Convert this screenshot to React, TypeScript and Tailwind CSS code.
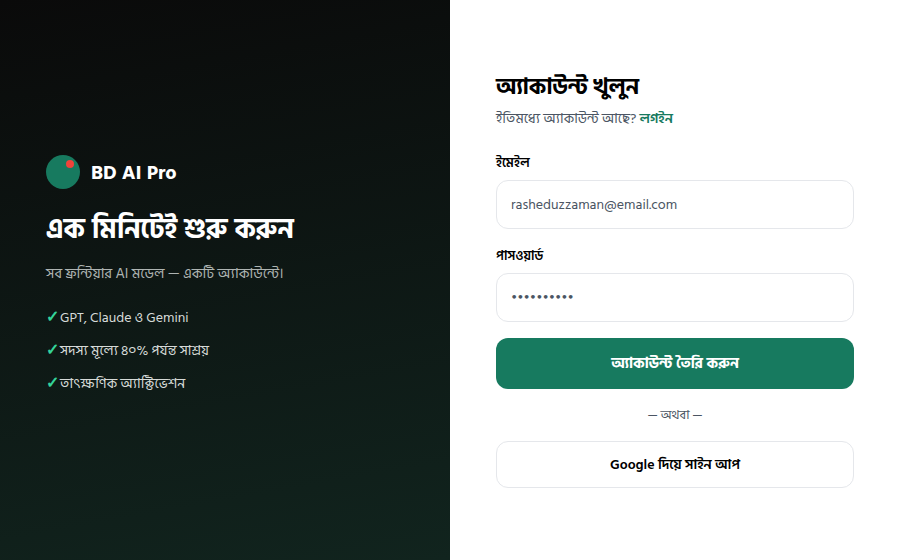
const features = ["GPT, Claude ও Gemini", "সদস্য মূল্যে ৪০% পর্যন্ত সাশ্রয়", "তাৎক্ষণিক অ্যাক্টিভেশন"];

const App = () => {
  return (
    <main className="flex h-[560px] w-[900px] bg-white font-['Hind_Siliguri',sans-serif] antialiased">
      <div className="flex w-[450px] flex-col justify-center bg-[linear-gradient(170deg,#0a0a0a_0%,#11241e_100%)] px-[46px]">
        <div className="mb-[22px] flex items-center gap-[11px]">
          <div className="relative h-[34px] w-[34px] rounded-full bg-[#177a5f]">
            <div className="absolute left-[20px] top-[5px] h-2 w-2 rounded-full bg-[#f0433a]" />
          </div>
          <span className="pt-[2px] text-xl font-bold text-white">BD AI Pro</span>
        </div>
        <h2 className="mb-[13px] text-[27.5px] font-bold leading-[38px] text-white">এক মিনিটেই শুরু করুন</h2>
        <p className="mb-[20px] text-[14.5px] leading-[24px] text-[#aeb4b2]">সব ফ্রন্টিয়ার AI মডেল — একটি অ্যাকাউন্টে।</p>
        <ul>
          {features.map((item) => (
            <li key={item} className="mb-[10px] flex items-center text-sm leading-[23px] text-[#d6dad8]">
              <span className="w-[14px] shrink-0 text-base font-bold leading-[23px] text-[#34d399]">✓</span>
              {item}
            </li>
          ))}
        </ul>
      </div>
      <div className="flex w-[450px] flex-col justify-center px-[46px]">
        <h1 className="mb-[9px] pt-[2px] text-[22.5px] font-bold leading-[26px] text-black">অ্যাকাউন্ট খুলুন</h1>
        <p className="mb-6 text-sm leading-5 text-[#4b5563]">
          ইতিমধ্যে অ্যাকাউন্ট আছে? <span className="font-semibold text-[#177a5f]">লগইন</span>
        </p>
        <label className="mb-[7px] text-[13px] font-semibold leading-5 text-black">ইমেইল</label>
        <div className="mb-[17px] flex h-[49px] items-center rounded-xl border border-[#e5e7eb] px-[14px] text-sm text-[#4b5563]">rasheduzzaman@email.com</div>
        <label className="mb-[7px] text-[13px] font-semibold leading-5 text-black">পাসওয়ার্ড</label>
        <div className="mb-4 flex h-[49px] items-center rounded-xl border border-[#e5e7eb] px-[14px] text-sm text-[#4b5563]">••••••••••</div>
        <button className="flex h-[51px] items-center justify-center rounded-xl bg-[#177a5f] pt-[2px] text-[15px] font-bold text-white">অ্যাকাউন্ট তৈরি করুন</button>
        <div className="my-4 text-center text-[12.5px] leading-5 text-[#4b5563]">— অথবা —</div>
        <button className="flex h-[47px] items-center justify-center rounded-xl border border-[#e5e7eb] text-sm font-semibold text-black">Google দিয়ে সাইন আপ</button>
      </div>
    </main>
  );
};

export default App;
